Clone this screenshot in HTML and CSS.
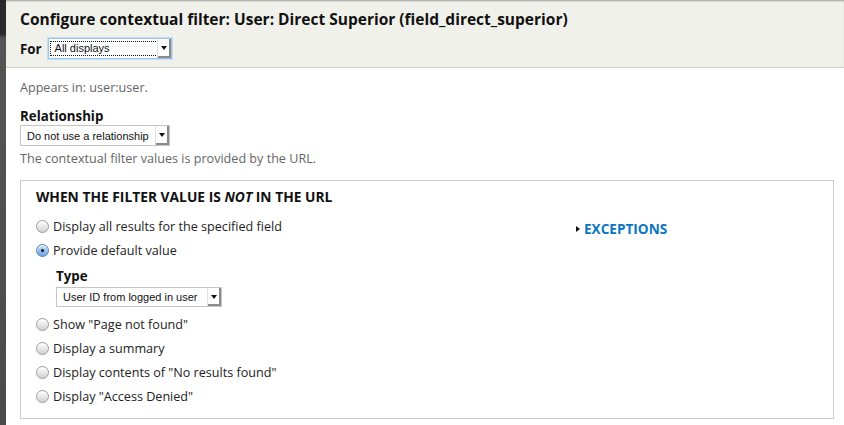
FILE: index.html
```html
<!DOCTYPE html>
<html lang="en">
  <head>
    <meta charset="UTF-8" />
    <title>Configure contextual filter</title>
    <link rel="stylesheet" href="styles.css">
  </head>
  <body>
    <div class="backdrop"></div>
    <div class="dialog">
      <div class="dialog-header">
        <h1 class="dialog-title">Configure contextual filter: User: Direct Superior (field_direct_superior)</h1>
        <div class="for-row">
          <label class="for-label">For</label>
          <div class="select select-focus select-for">
            <span class="select-text">All displays</span>
            <span class="select-arrow"></span>
          </div>
        </div>
      </div>

      <div class="dialog-body">
        <p class="appears">Appears in: user:user.</p>
        <div class="field-label">Relationship</div>
        <div class="select select-rel">
          <span class="select-text">Do not use a relationship</span>
          <span class="select-arrow"></span>
        </div>
        <p class="description">The contextual filter values is provided by the URL.</p>

        <div class="filter-box">
          <div class="filter-main">
            <div class="filter-heading">When the filter value is <em>not</em> in the URL</div>
            <div class="radio-row"><span class="radio"></span>Display all results for the specified field</div>
            <div class="radio-row"><span class="radio checked"></span>Provide default value</div>
            <div class="sub-field">
              <div class="field-label">Type</div>
              <div class="select select-type">
                <span class="select-text">User ID from logged in user</span>
                <span class="select-arrow"></span>
              </div>
            </div>
            <div class="radio-row"><span class="radio"></span>Show "Page not found"</div>
            <div class="radio-row"><span class="radio"></span>Display a summary</div>
            <div class="radio-row"><span class="radio"></span>Display contents of "No results found"</div>
            <div class="radio-row"><span class="radio"></span>Display "Access Denied"</div>
          </div>
          <div class="filter-side">
            <a class="exceptions" href="#"><span class="caret"></span>Exceptions</a>
          </div>
        </div>
      </div>
    </div>
  </body>
</html>
```

FILE: styles.css
```css
* {
  margin: 0;
  padding: 0;
  box-sizing: border-box;
}

body {
  font-family: "Open Sans", "DejaVu Sans", sans-serif;
  font-size: 12.6px;
  color: #222;
  background: #3b3b3b;
  display: flex;
  height: 425px;
  overflow: hidden;
}

.backdrop {
  flex: 0 0 6px;
  background: linear-gradient(180deg, #2a2a2a 0%, #2a2a2a 8%, #555 9%, #4a4a4a 100%);
}

.dialog {
  flex: 1;
  min-width: 0;
  background: #fff;
}

.dialog-header {
  height: 68px;
  padding: 8px 14px 0;
  background: #f1f1ec;
  border-bottom: 1px solid #cfcfcf;
  box-shadow: inset 0 2px 2px -1px rgba(0, 0, 0, 0.35);
}

.dialog-title {
  font-size: 15.5px;
  font-weight: 700;
  line-height: 22px;
  color: #111;
}

.for-row {
  display: flex;
  align-items: center;
  gap: 6px;
  margin-top: 8px;
}

.for-label {
  font-weight: 700;
  font-size: 13.3px;
  color: #111;
}

/* fake mac-style select */
.select {
  display: flex;
  align-items: center;
  height: 21px;
  background: #fff;
  border: 1px solid #c6c6c6;
  font-family: "Liberation Sans", Arial, sans-serif;
  font-size: 11px;
  color: #111;
  position: relative;
}

.select-text {
  flex: 1;
  padding-left: 6px;
  white-space: nowrap;
}

.select-arrow {
  width: 14px;
  height: 100%;
  border-left: 1px solid #e0e0e0;
  box-shadow: inset -2px -2px 0 #8a8a8a;
  position: relative;
}

.select-arrow::after {
  content: "";
  position: absolute;
  left: 3px;
  top: 7px;
  border-left: 3px solid transparent;
  border-right: 3px solid transparent;
  border-top: 4px solid #111;
}

.select-focus {
  border-color: #9cc3ea;
  box-shadow: 0 0 0 1px #c7dcf2;
}

.select-focus .select-text {
  margin: 2px 0 2px 2px;
  padding-left: 4px;
  line-height: 13px;
  outline: 1px dotted #111;
}

.select-for {
  width: 124px;
}

.select-rel {
  width: 150px;
}

.select-type {
  width: 166px;
  height: 20px;
}

.dialog-body {
  padding: 11px 14px 0;
}

.appears {
  line-height: 18px;
  color: #666;
}

.field-label {
  font-size: 13.3px;
  font-weight: 700;
  line-height: 18px;
  color: #111;
  margin-top: 10px;
}

.description {
  line-height: 18px;
  color: #666;
  margin-top: 4px;
}

.filter-box {
  display: flex;
  margin-top: 12px;
  width: 814px;
  height: 239px;
  border: 1px solid #cccccc;
  padding: 7px 0 0 15px;
}

.filter-main {
  flex: 0 0 540px;
}

.filter-heading {
  font-size: 13.8px;
  font-weight: 700;
  line-height: 18px;
  text-transform: uppercase;
  color: #111;
  margin-bottom: 8px;
}

.radio-row {
  display: flex;
  align-items: center;
  gap: 4px;
  height: 24px;
  color: #222;
}

.radio {
  flex: 0 0 13px;
  height: 13px;
  border-radius: 50%;
  border: 1px solid #9a9a9a;
  background: linear-gradient(180deg, #ffffff 0%, #e6e6e6 55%, #d0d0d0 100%);
  box-shadow: inset 0 1px 1px rgba(255, 255, 255, 0.8);
  position: relative;
}

.radio.checked {
  border-color: #5a7fb4;
  background: linear-gradient(180deg, #d6e8fb 0%, #8fbdee 55%, #6aa5e6 100%);
}

.radio.checked::after {
  content: "";
  position: absolute;
  left: 4px;
  top: 4px;
  width: 3px;
  height: 3px;
  border-radius: 50%;
  background: #111;
}

.sub-field {
  padding-left: 20px;
  margin-bottom: 5px;
}

.sub-field .field-label {
  margin-top: 5px;
}

.sub-field .select {
  margin-top: 2px;
}

.filter-side {
  padding-top: 31px;
}

.exceptions {
  display: flex;
  align-items: center;
  gap: 4px;
  font-size: 13.6px;
  font-weight: 700;
  text-transform: uppercase;
  color: #0b76c1;
  text-decoration: none;
}

.caret {
  border-top: 3.5px solid transparent;
  border-bottom: 3.5px solid transparent;
  border-left: 4px solid #111;
}
```
